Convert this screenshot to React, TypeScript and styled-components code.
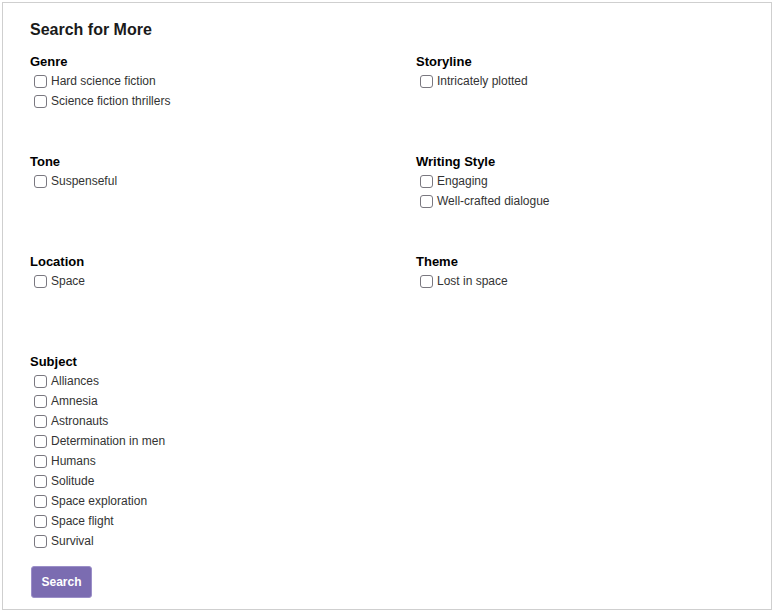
import React from "react";
import styled, { createGlobalStyle } from "styled-components";

const GlobalStyle = createGlobalStyle`
  body {
    margin: 0;
    font-family: "Liberation Sans", Arial, Helvetica, sans-serif;
    background: #ffffff;
  }
`;

const Container = styled.div`
  margin: 2px;
  width: 770px;
  height: 608px;
  box-sizing: border-box;
  border: 1px solid #cfcfcf;
  padding: 17px 28px 9px 27px;
`;

const Title = styled.h2`
  margin: 0 0 13px;
  font-size: 16px;
  line-height: 20px;
  font-weight: 700;
  color: #1a1a1a;
`;

const Groups = styled.div`
  display: grid;
  grid-template-columns: 386px 1fr;
`;

const Group = styled.div`
  min-height: 100px;
`;

const GroupHeading = styled.div`
  font-size: 13px;
  line-height: 18px;
  font-weight: 700;
  color: #000;
`;

const Option = styled.label`
  display: flex;
  align-items: center;
  height: 20px;
  padding-left: 4px;
  gap: 4px;
  font-size: 12px;
  color: #333;
  cursor: pointer;
`;

const Box = styled.input.attrs({ type: "checkbox" })`
  appearance: none;
  margin: 0;
  width: 13px;
  height: 13px;
  box-sizing: border-box;
  border: 1.5px solid #7a7880;
  border-radius: 3px;
  background: #fff;
`;

const SearchButton = styled.button`
  margin-top: 15px;
  margin-left: 1px;
  width: 61px;
  height: 32px;
  border: 1px solid #9b8fc8;
  border-radius: 3px;
  background: #7b6cb1;
  color: #fff;
  font-family: inherit;
  font-size: 12px;
  font-weight: 700;
  cursor: pointer;
`;

const groups = [
  { name: "Genre", items: ["Hard science fiction", "Science fiction thrillers"] },
  { name: "Storyline", items: ["Intricately plotted"] },
  { name: "Tone", items: ["Suspenseful"] },
  { name: "Writing Style", items: ["Engaging", "Well-crafted dialogue"] },
  { name: "Location", items: ["Space"] },
  { name: "Theme", items: ["Lost in space"] },
  {
    name: "Subject",
    items: [
      "Alliances",
      "Amnesia",
      "Astronauts",
      "Determination in men",
      "Humans",
      "Solitude",
      "Space exploration",
      "Space flight",
      "Survival",
    ],
  },
];

export default function App() {
  return (
    <>
      <GlobalStyle />
      <Container>
        <Title>Search for More</Title>
        <Groups>
          {groups.map((g) => (
            <Group key={g.name}>
              <GroupHeading>{g.name}</GroupHeading>
              {g.items.map((item) => (
                <Option key={item}>
                  <Box />
                  {item}
                </Option>
              ))}
            </Group>
          ))}
        </Groups>
        <SearchButton type="button">Search</SearchButton>
      </Container>
    </>
  );
}
